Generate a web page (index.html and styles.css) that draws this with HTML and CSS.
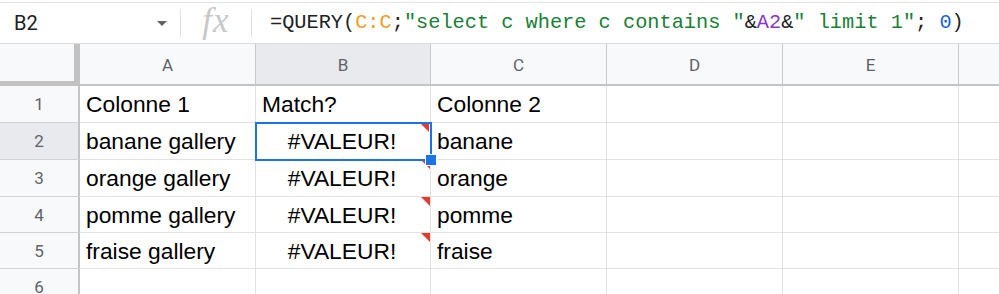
FILE: index.html
```html
<!DOCTYPE html>
<html>
<head>
<meta charset="utf-8">
<link rel="stylesheet" href="styles.css">
</head>
<body>
<div class="fbar">
  <div class="namebox">
    <span class="ref">B2</span>
    <span class="caret"></span>
  </div>
  <div class="sep"></div>
  <div class="fx">fx</div>
  <div class="sep"></div>
  <div class="formula">=QUERY(<span class="rng">C:C</span>;<span class="str">"select c where c contains "</span>&amp;<span class="ref2">A2</span>&amp;<span class="str">" limit 1"</span>; <span class="num">0</span>)</div>
</div>
<div class="sheet">
  <div class="corner"></div>
  <div class="ch">A</div>
  <div class="ch sel">B</div>
  <div class="ch">C</div>
  <div class="ch">D</div>
  <div class="ch">E</div>
  <div class="ch last"></div>

  <div class="rh">1</div>
  <div class="c">Colonne 1</div>
  <div class="c">Match?</div>
  <div class="c">Colonne 2</div>
  <div class="c"></div><div class="c"></div><div class="c last"></div>

  <div class="rh sel">2</div>
  <div class="c">banane gallery</div>
  <div class="c err ctr active">#VALEUR!<span class="handle"></span></div>
  <div class="c">banane</div>
  <div class="c"></div><div class="c"></div><div class="c last"></div>

  <div class="rh">3</div>
  <div class="c">orange gallery</div>
  <div class="c err ctr">#VALEUR!</div>
  <div class="c">orange</div>
  <div class="c"></div><div class="c"></div><div class="c last"></div>

  <div class="rh">4</div>
  <div class="c">pomme gallery</div>
  <div class="c err ctr">#VALEUR!</div>
  <div class="c">pomme</div>
  <div class="c"></div><div class="c"></div><div class="c last"></div>

  <div class="rh">5</div>
  <div class="c">fraise gallery</div>
  <div class="c err ctr">#VALEUR!</div>
  <div class="c">fraise</div>
  <div class="c"></div><div class="c"></div><div class="c last"></div>

  <div class="rh">6</div>
  <div class="c"></div>
  <div class="c"></div>
  <div class="c"></div>
  <div class="c"></div><div class="c"></div><div class="c last"></div>
</div>
</body>
</html>
```
FILE: styles.css
```css
* { box-sizing: border-box; }
html, body { margin: 0; padding: 0; background: #fff; overflow: hidden; }
body { width: 999px; height: 294px; }

.fbar {
  margin-top: 2px;
  height: 42px;
  border-top: 1px solid #e3e3e3;
  border-bottom: 1px solid #dadce0;
  display: flex;
  align-items: center;
}
.namebox {
  width: 180px;
  display: flex;
  align-items: center;
  padding-left: 14px;
  padding-right: 13px;
}
.ref {
  font-family: Roboto, "Liberation Sans", sans-serif;
  font-size: 20px;
  color: #202124;
  flex: 1;
}
.caret {
  width: 0; height: 0;
  border-left: 5px solid transparent;
  border-right: 5px solid transparent;
  border-top: 5px solid #5f6368;
}
.sep {
  width: 1px;
  height: 28px;
  background: #e0e0e0;
}
.fx {
  width: 70px;
  text-align: center;
  font-family: "Liberation Serif", "DejaVu Serif", serif;
  font-style: italic;
  font-size: 35px;
  line-height: 36px;
  color: #c8c8c8;
  letter-spacing: 1px;
  padding-bottom: 4px;
}
.formula {
  padding-left: 18px;
  font-family: "Liberation Mono", "DejaVu Sans Mono", monospace;
  font-size: 20.3px;
  color: #202124;
  white-space: pre;
  padding-bottom: 2px;
}
.rng { color: #f39c1f; }
.str { color: #188038; }
.ref2 { color: #8e35c4; }
.num { color: #1a5fd6; }

.sheet {
  display: grid;
  grid-template-columns: 80px 176px 175px 176px 176px 176px 1fr;
  grid-template-rows: 42px 37px 37px 37px 36px 36px 36px;
}
.corner {
  background: #f8f9fa;
  border-right: 6px solid #c2c2c2;
  border-bottom: 5px solid #c2c2c2;
}
.ch {
  background: #f8f9fa;
  border-right: 1px solid #c9c9c9;
  border-bottom: 2px solid #c4c4c4;
  font-family: Roboto, "Liberation Sans", sans-serif;
  font-size: 17px;
  color: #5f6368;
  display: flex;
  align-items: center;
  justify-content: center;
  padding-top: 1px;
}
.ch.sel, .rh.sel { background: #e8eaed; }
.rh {
  background: #f8f9fa;
  border-right: 2px solid #c4c4c4;
  border-bottom: 1px solid #d3d3d3;
  font-family: Roboto, "Liberation Sans", sans-serif;
  font-size: 17px;
  color: #5f6368;
  display: flex;
  align-items: center;
  justify-content: center;
}
.c {
  position: relative;
  border-right: 1px solid #e2e2e2;
  border-bottom: 1px solid #e2e2e2;
  font-family: "Liberation Sans", Arial, sans-serif;
  font-size: 22.8px;
  color: #000;
  display: flex;
  align-items: center;
  padding-left: 6px;
  white-space: nowrap;
  padding-top: 1px;
}
.c.last, .ch.last { border-right: none; }
.c.ctr { justify-content: center; padding-left: 0; padding-right: 2px; }
.c.err::after {
  content: "";
  position: absolute;
  top: 0;
  right: 0;
  width: 0; height: 0;
  border-top: 9px solid #e53a2f;
  border-left: 9px solid transparent;
}
.c.active {
  outline: 2px solid #1a73e8;
  outline-offset: -1px;
  z-index: 2;
}
.c.active::after { top: 1px; right: 1px; border-top-width: 8px; border-left-width: 8px; }
.handle {
  position: absolute;
  right: -7px;
  bottom: -7px;
  width: 12px;
  height: 12px;
  background: #1a73e8;
  border: 1px solid #fff;
}
```
